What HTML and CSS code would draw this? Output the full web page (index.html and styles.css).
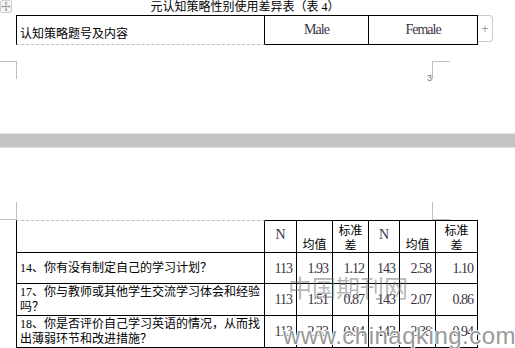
FILE: index.html
```html
<!DOCTYPE html>
<html lang="zh-CN">
<head>
<meta charset="utf-8">
<title>元认知策略性别使用差异表</title>
<link rel="stylesheet" href="styles.css">
</head>
<body>
<div class="doc">
  <section class="page page-1">
    <span class="move-handle">
      <svg width="12" height="13" viewBox="0 0 12 13">
        <rect x="0.5" y="0.5" width="11" height="12" rx="1.5" fill="#f6f6f6" stroke="#cfcfcf"/>
        <path d="M6 2.5v8M2 6.5h8" stroke="#9a9a9a" stroke-width="1" fill="none"/>
        <path d="M6 1.8l-1.6 1.8h3.2zM6 11.2l-1.6-1.8h3.2zM1.3 6.5l1.8-1.6v3.2zM10.7 6.5l-1.8-1.6v3.2z" fill="#9a9a9a"/>
      </svg>
    </span>
    <div class="title">元认知策略性别使用差异表（表 4）</div>
    <div class="table-row">
      <div class="tbl tbl-head">
        <div class="c c-item c-bottom">认知策略题号及内容</div>
        <div class="c c-sex">Male</div>
        <div class="c c-sex">Female</div>
      </div>
      <div class="add-col">+</div>
    </div>
    <div class="corners corners-top">
      <span class="mark mark-tl"></span>
      <span class="pageno">3</span>
      <span class="mark mark-tr"></span>
    </div>
  </section>

  <div class="page-gap"></div>

  <section class="page page-2">
    <div class="corners corners-bottom">
      <span class="mark mark-bl"></span>
      <span class="mark mark-br"></span>
    </div>
    <div class="tbl tbl-stats">
      <div class="c h h-item"></div>
      <div class="c h h-mid num">N</div>
      <div class="c h h-bot">均值</div>
      <div class="c h h-mid">标准差</div>
      <div class="c h h-mid num">N</div>
      <div class="c h h-bot">均值</div>
      <div class="c h h-mid">标准差</div>

      <div class="c q">14、你有没有制定自己的学习计划？</div>
      <div class="c v">113</div>
      <div class="c v">1.93</div>
      <div class="c v">1.12</div>
      <div class="c v">143</div>
      <div class="c v">2.58</div>
      <div class="c v">1.10</div>

      <div class="c q">17、你与教师或其他学生交流学习体会和经验吗？</div>
      <div class="c v">113</div>
      <div class="c v">1.51</div>
      <div class="c v">0.87</div>
      <div class="c v">143</div>
      <div class="c v">2.07</div>
      <div class="c v">0.86</div>

      <div class="c q">18、你是否评价自己学习英语的情况，从而找出薄弱环节和改进措施？</div>
      <div class="c v">113</div>
      <div class="c v">2.33</div>
      <div class="c v">0.94</div>
      <div class="c v">143</div>
      <div class="c v">2.38</div>
      <div class="c v">0.94</div>
    </div>
    <div class="watermark wm-cn">中国期刊网</div>
    <div class="watermark wm-url">www.chinaqking.com</div>
  </section>
</div>
</body>
</html>
```

FILE: styles.css
```css
html, body {
  margin: 0;
  padding: 0;
  background: #ffffff;
}

body {
  width: 515px;
  height: 348px;
  overflow: hidden;
  font-family: "Liberation Serif", "Noto Sans CJK SC", serif;
  color: #000;
}

.page {
  position: relative;
}

.page-1 {
  height: 133px;
}

.move-handle {
  position: absolute;
  left: 0;
  top: 0;
  width: 12px;
  height: 13px;
  line-height: 0;
}

.title {
  margin-left: 16px;
  width: 458px;
  height: 15px;
  padding-top: 1px;
  box-sizing: border-box;
  line-height: 13px;
  text-align: center;
  font-family: "Liberation Serif", "Noto Sans CJK SC", serif;
  font-size: 12px;
}

.table-row {
  display: flex;
  margin-left: 16px;
  height: 30px;
}

.tbl {
  display: grid;
}

.c {
  box-sizing: border-box;
  border-right: 1px solid #000;
  border-bottom: 1px solid #000;
}

.tbl-head {
  grid-template-columns: 249px 104px 109px;
  grid-template-rows: 30px;
}

.tbl-head .c {
  border-top: 1px solid #000;
}

.c-item {
  border-left: 1px solid #000;
  border-bottom: 1px dashed #bcbcbc !important;
  display: flex;
  align-items: flex-end;
  padding: 0 0 4px 3px;
  font-family: "Noto Sans CJK SC", sans-serif;
  font-size: 12px;
  line-height: 15px;
}

.c-sex {
  display: flex;
  align-items: center;
  justify-content: center;
  font-size: 14px;
  letter-spacing: -1px;
  color: #3c3444;
  line-height: 15px;
  padding-bottom: 1px;
}

.add-col {
  box-sizing: border-box;
  width: 15px;
  height: 27px;
  border: 1px solid #cacaca;
  border-left: none;
  border-radius: 0 4px 4px 0;
  color: #9a9a9a;
  font-family: "Liberation Sans", sans-serif;
  font-size: 12px;
  display: flex;
  align-items: center;
  justify-content: center;
}

.corners {
  display: flex;
  height: 18px;
}

.corners-top {
  margin-top: 16px;
  align-items: flex-end;
}

.mark {
  box-sizing: border-box;
  height: 18px;
  border: 0 solid #bfbfbf;
}

.mark-tl {
  width: 17px;
  border-top-width: 1px;
  border-right-width: 1px;
}

.mark-tr {
  width: 18px;
  border-top-width: 1px;
  border-left-width: 1px;
}

.pageno {
  margin-left: 410px;
  width: 5px;
  font-family: "Liberation Sans", sans-serif;
  font-size: 9px;
  line-height: 9px;
  color: #7a6a66;
  margin-bottom: -4px;
}

.page-gap {
  height: 13px;
  background: #c3c3c3;
  border-top: 1px solid #e6e6e6;
  border-bottom: 1px solid #dedede;
}

.page-2 {
  padding-top: 54px;
}

.mark-bl {
  width: 17px;
  border-right-width: 1px;
  border-bottom-width: 1px;
}

.mark-br {
  margin-left: 415px;
  width: 18px;
  border-left-width: 1px;
  border-bottom-width: 1px;
}

.tbl-stats {
  margin-left: 16px;
  grid-template-columns: 249px 32px 36px 36px 31px 36px 42px;
  grid-template-rows: 33px 31px 32px 32px;
}

.h {
  border-top: 1px solid #000;
  font-family: "Noto Sans CJK SC", sans-serif;
  font-size: 12px;
  line-height: 15px;
  text-align: center;
  display: flex;
  justify-content: center;
  padding: 0 3px;
}

.h-item {
  border-left: 1px solid #000;
  border-top: 1px dashed #bcbcbc;
}

.h-mid {
  align-items: center;
}

.h-bot {
  align-items: flex-end;
  padding-bottom: 1px;
}

.h.num {
  font-family: "Liberation Serif", serif;
  font-size: 14px;
  color: #3c3444;
  padding-bottom: 4px;
}

.q {
  border-left: 1px solid #000;
  display: flex;
  align-items: center;
  padding: 0 2px 0 3px;
  font-family: "Liberation Serif", "Noto Sans CJK SC", sans-serif;
  font-size: 12px;
  line-height: 15px;
}

.v {
  display: flex;
  align-items: center;
  justify-content: flex-end;
  padding-right: 4px;
  font-size: 14px;
  letter-spacing: -1px;
  color: #3c3444;
  line-height: 15px;
}

.watermark {
  position: absolute;
  white-space: nowrap;
  pointer-events: none;
}

.wm-cn {
  left: 288px;
  top: 127px;
  font-family: "Noto Sans CJK SC", sans-serif;
  font-size: 24px;
  line-height: 24px;
  color: rgba(110, 110, 110, 0.5);
}

.wm-url {
  left: 283px;
  top: 176px;
  font-family: "Liberation Sans", sans-serif;
  font-size: 24px;
  line-height: 24px;
  letter-spacing: 0.5px;
  color: #999999;
  text-shadow: 1px 0 #fff, -1px 0 #fff, 0 1px #fff, 0 -1px #fff;
}
```
